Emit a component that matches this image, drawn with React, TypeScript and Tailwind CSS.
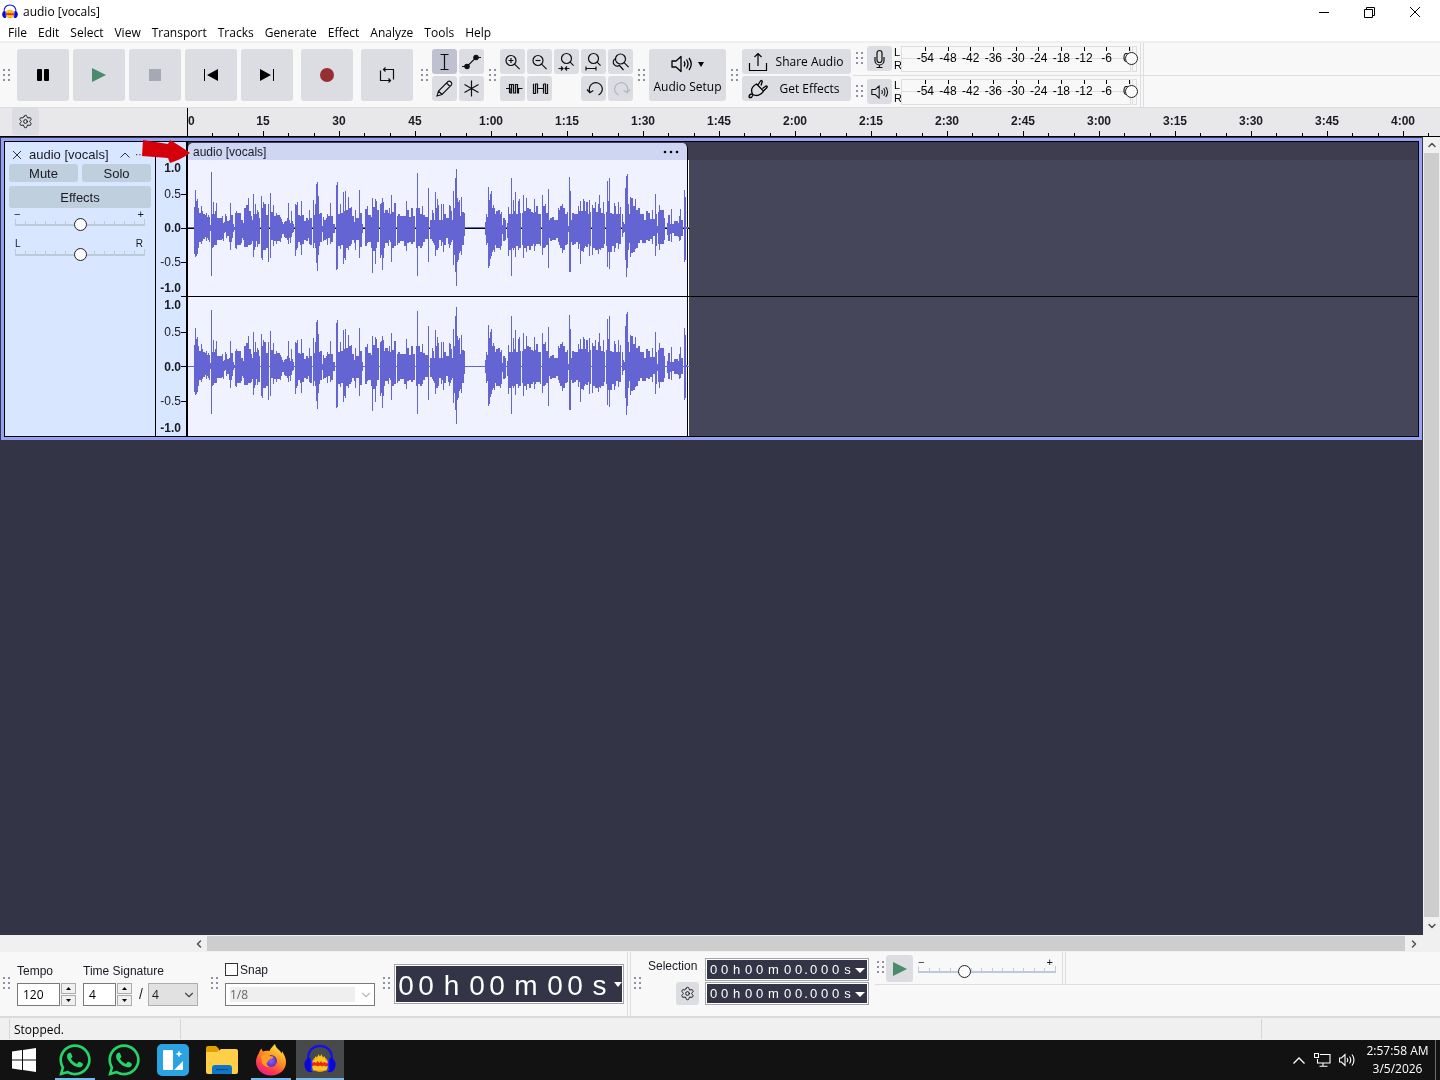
import React from 'react';
import { ChevronDown, ChevronLeft, ChevronRight, ChevronUp, Settings } from 'lucide-react';
import { FaWhatsapp } from 'react-icons/fa';
import clsx from 'clsx';

const UI = "font-['Open_Sans',sans-serif]";
const ARIAL = "font-['Liberation_Sans',Arial,sans-serif]";

// Peaks of the clip, one step each: [x, above the centre line, below it]
const PEAKS: number[][] = [
  [0, 0, 0], [6, 21, 26], [7, 38, 29], [8, 27, 28], [9, 29, 26], [10, 20, 20], [11, 15, 14], [13, 22, 16],
  [14, 17, 13], [15, 14, 11], [17, 13, 9], [18, 15, 13], [19, 11, 10], [20, 13, 12], [21, 11, 14], [22, 3, 3],
  [23, 56, 48], [24, 14, 20], [25, 26, 19], [26, 14, 17], [27, 17, 17], [28, 25, 17], [29, 10, 12], [34, 12, 11],
  [35, 5, 13], [36, 6, 5], [37, 14, 4], [38, 12, 10], [39, 7, 8], [41, 8, 14], [42, 25, 22], [43, 13, 14],
  [44, 13, 10], [45, 4, 4], [46, 1, 2], [47, 15, 20], [48, 17, 21], [49, 15, 17], [53, 8, 15], [54, 8, 10],
  [55, 5, 12], [56, 20, 19], [58, 23, 19], [60, 30, 17], [61, 17, 17], [63, 12, 16], [64, 8, 13], [65, 34, 29],
  [66, 14, 22], [67, 24, 19], [68, 14, 13], [69, 18, 19], [70, 16, 16], [71, 10, 16], [72, 0, 0], [73, 32, 30],
  [74, 20, 32], [75, 26, 22], [76, 24, 22], [78, 13, 20], [80, 24, 34], [81, 0, 0], [82, 35, 30], [83, 16, 12],
  [85, 23, 18], [86, 12, 13], [88, 15, 16], [89, 13, 13], [92, 11, 14], [93, 9, 10], [94, 6, 6], [95, 4, 6],
  [96, 6, 9], [97, 7, 10], [99, 10, 12], [100, 25, 16], [101, 8, 10], [102, 5, 15], [103, 17, 9], [104, 7, 5],
  [105, 4, 4], [106, 0, 0], [107, 24, 28], [108, 23, 22], [109, 26, 20], [110, 13, 14], [112, 12, 17],
  [113, 27, 27], [114, 13, 16], [116, 7, 12], [118, 10, 13], [120, 8, 10], [121, 18, 16], [122, 10, 17],
  [124, 0, 0], [125, 28, 20], [126, 13, 15], [127, 24, 20], [128, 44, 35], [129, 46, 43], [130, 32, 27],
  [131, 14, 18], [132, 15, 14], [134, 2, 4], [135, 11, 13], [136, 8, 12], [138, 10, 11], [139, 14, 17],
  [140, 12, 10], [142, 25, 16], [143, 12, 14], [145, 4, 5], [147, 0, 0], [148, 43, 42], [149, 46, 41],
  [150, 14, 18], [152, 24, 21], [153, 15, 17], [155, 36, 36], [156, 17, 30], [157, 37, 32], [158, 18, 20],
  [160, 31, 22], [161, 20, 18], [163, 21, 16], [164, 12, 12], [166, 6, 15], [167, 18, 22], [168, 10, 12],
  [171, 38, 30], [172, 15, 19], [174, 4, 5], [175, 0, 0], [177, 19, 18], [179, 22, 15], [180, 13, 14],
  [183, 11, 20], [184, 30, 45], [185, 21, 23], [187, 29, 36], [188, 27, 20], [189, 18, 14], [191, 0, 0],
  [192, 24, 30], [193, 25, 27], [194, 30, 42], [195, 26, 30], [196, 15, 20], [197, 18, 15], [200, 15, 18],
  [201, 20, 12], [202, 14, 14], [203, 33, 34], [204, 16, 20], [206, 25, 18], [208, 0, 0], [209, 12, 17],
  [210, 14, 15], [212, 12, 13], [216, 12, 18], [218, 27, 23], [219, 18, 15], [221, 11, 14], [223, 20, 16],
  [225, 12, 14], [227, 0, 0], [228, 20, 20], [229, 55, 48], [230, 20, 18], [232, 14, 20], [234, 22, 18],
  [235, 13, 14], [237, 11, 11], [240, 40, 34], [241, 0, 0], [242, 8, 11], [244, 18, 13], [245, 15, 15],
  [246, 8, 17], [247, 36, 28], [248, 20, 22], [249, 29, 22], [250, 23, 20], [251, 8, 12], [253, 24, 18],
  [254, 8, 14], [255, 24, 24], [256, 14, 17], [258, 10, 10], [260, 10, 16], [261, 23, 20], [262, 22, 17],
  [263, 17, 14], [264, 8, 12], [265, 37, 37], [266, 20, 27], [267, 50, 44], [268, 59, 58], [269, 30, 34],
  [270, 26, 32], [271, 28, 25], [272, 12, 23], [273, 31, 27], [274, 16, 17], [276, 15, 8], [277, 0, 0],
  [297, 6, 7], [298, 14, 17], [299, 11, 15], [300, 41, 40], [301, 28, 38], [302, 34, 31], [303, 37, 28],
  [304, 20, 24], [305, 23, 22], [306, 20, 24], [307, 14, 17], [308, 17, 20], [310, 18, 20], [312, 14, 22],
  [313, 16, 18], [314, 3, 6], [315, 10, 13], [317, 8, 12], [318, 0, 0], [319, 5, 10], [320, 21, 28],
  [321, 14, 22], [323, 50, 48], [324, 14, 20], [325, 28, 22], [326, 17, 20], [327, 36, 29], [328, 14, 18],
  [330, 27, 22], [331, 29, 20], [332, 15, 20], [333, 0, 0], [334, 15, 17], [335, 33, 30], [336, 17, 20],
  [338, 30, 24], [339, 20, 18], [341, 19, 22], [343, 16, 18], [345, 15, 16], [346, 29, 23], [347, 16, 18],
  [348, 22, 16], [350, 14, 16], [352, 14, 18], [353, 0, 0], [354, 33, 27], [355, 22, 20], [357, 24, 19],
  [358, 15, 17], [360, 39, 40], [361, 8, 10], [362, 10, 13], [364, 11, 12], [366, 8, 12], [368, 8, 10],
  [370, 20, 14], [371, 18, 17], [372, 22, 20], [374, 24, 25], [375, 20, 22], [377, 14, 17], [379, 16, 16],
  [380, 2, 4], [381, 51, 44], [382, 37, 44], [383, 8, 14], [384, 15, 17], [386, 14, 16], [388, 14, 14],
  [390, 22, 21], [391, 17, 16], [392, 27, 36], [393, 17, 23], [395, 29, 24], [396, 27, 20], [397, 17, 18],
  [398, 26, 19], [400, 14, 16], [401, 28, 28], [402, 16, 18], [403, 0, 0], [404, 23, 27], [405, 20, 20],
  [407, 26, 22], [408, 16, 22], [410, 24, 26], [411, 33, 21], [412, 20, 22], [413, 15, 20], [415, 26, 20],
  [416, 14, 16], [417, 0, 0], [418, 16, 18], [419, 47, 39], [420, 27, 24], [421, 50, 41], [422, 15, 24],
  [424, 14, 18], [426, 25, 24], [427, 22, 20], [428, 14, 15], [430, 26, 21], [431, 14, 16], [432, 21, 16],
  [433, 0, 0], [434, 14, 9], [435, 6, 5], [436, 4, 4], [437, 40, 32], [438, 52, 49], [439, 54, 40],
  [440, 24, 22], [441, 14, 15], [442, 31, 29], [443, 30, 25], [445, 22, 24], [447, 29, 21], [448, 18, 20],
  [450, 20, 15], [452, 14, 12], [454, 14, 15], [456, 8, 15], [458, 17, 12], [460, 15, 13], [462, 9, 11],
  [464, 18, 16], [465, 9, 8], [467, 34, 28], [468, 14, 18], [469, 2, 5], [470, 16, 16], [471, 23, 22],
  [472, 18, 16], [476, 10, 12], [477, 0, 0], [479, 5, 7], [480, 13, 13], [482, 4, 6], [483, 19, 14],
  [484, 4, 5], [486, 7, 8], [490, 5, 9], [491, 12, 13], [492, 19, 12], [493, 8, 8], [495, 0, 0],
  [496, 38, 34], [497, 31, 32], [498, 1, 1], [500, 0, 0],
];

const wavePath = (cy: number) => {
  let d = '';
  for (let i = 0; i < PEAKS.length - 1; i++) {
    const [x, up, down] = PEAKS[i];
    const w = PEAKS[i + 1][0] - x;
    if (up + down > 0) d += `M${x} ${cy - up}h${w}v${up + down}h${-w}z`;
  }
  return d;
};

const Waveform = ({ cy, zeroLine }: { cy: number; zeroLine?: boolean }) => (
  <svg width="502" height="139" className="absolute left-0 top-0" shapeRendering="crispEdges">
    {zeroLine && <rect x="0" y={cy} width="502" height="1" fill="#000" />}
    <rect x="0" y={zeroLine ? cy - 1 : cy} width="502" height="1" fill="#6464d2" />
    <path d={wavePath(cy)} fill="#6464d2" />
  </svg>
);

const Grip = ({ className }: { className?: string }) => (
  <div className={clsx('grid shrink-0 grid-cols-2 gap-[3px]', className)}>
    {[0, 1, 2, 3, 4, 5].map((i) => (
      <span key={i} className="size-[2px] bg-[#8f90a8]" />
    ))}
  </div>
);

interface BtnProps {
  label: string;
  className?: string;
  children?: React.ReactNode;
}

const Btn: React.FC<BtnProps> = ({ label, className, children }) => (
  <button
    aria-label={label}
    className={clsx('flex shrink-0 items-center justify-center rounded-[3px] text-[#101010]', className)}
  >
    {children}
  </button>
);

const BigBtn: React.FC<BtnProps> = ({ className, ...rest }) => (
  <Btn {...rest} className={clsx('size-[52px] bg-[#dcdde3]', className)} />
);

const SmallBtn: React.FC<BtnProps & { active?: boolean }> = ({ active, className, ...rest }) => (
  <Btn {...rest} className={clsx('size-[25px]', active ? 'bg-[#bfc1d0]' : 'bg-[#dcdde3]', className)} />
);

const Icon = ({ size = 25, children }: { size?: number; children: React.ReactNode }) => (
  <svg width={size} height={size} viewBox={`0 0 ${size} ${size}`} fill="none" stroke="currentColor" strokeWidth="1.2">
    {children}
  </svg>
);

const PlayIcon = () => (
  <svg width="14" height="14" viewBox="0 0 14 14">
    <path d="M0 0L14 7L0 14z" fill="#4a8b6b" />
  </svg>
);

const SpeakerIcon = ({ className }: { className?: string }) => (
  <svg width="22" height="18" viewBox="0 0 22 18" fill="none" stroke="currentColor" strokeWidth="1.3" className={className}>
    <path d="M1 6h4l5-4.500v15L5 12H1z" strokeLinejoin="round" />
    <path d="M13 6.500q1.800 2.500 0 5M15.500 4.500q3 4.500 0 9M18 3q4.500 6 0 12" />
  </svg>
);

const menus = ['File', 'Edit', 'Select', 'View', 'Transport', 'Tracks', 'Generate', 'Effect', 'Analyze', 'Tools', 'Help'];

const AudacityIcon = ({ size }: { size: number }) => (
  <svg width={size} height={size} viewBox="0 0 32 32">
    <circle cx="16" cy="20" r="8" fill="#f0961a" />
    <path d="M7.500 22l1.500-7 1 2 1.500-5 1.500 3 1.500-5 1.500 3 1.500-3 1.500 5 1.500-3 1.500 5 1-2 1.500 7-2 4.500H9z" fill="#f9c51f" />
    <path d="M7.500 19l3-1 1.500 1 1.500-2 2 2 1.500-2 1.500 2 2-1 1.500 1 2.500.5v2.500l-3 .5-1.500-1-2 1-2-1-2 1-2-1-4.500.5z" fill="#ee2a12" />
    <path d="M4.500 18C2.500 7 9 2 16 2s13.500 5 11.500 16" fill="none" stroke="#1414e6" strokeWidth="2.400" />
    <path d="M6.500 14C1 13.500-1 20 1.500 25c1.500 3 4 3.500 6.500 3z" fill="#0808d8" />
    <path d="M25.500 14c5.500-.5 7.500 6 5 11-1.500 3-4 3.500-6.500 3z" fill="#0808d8" />
    <path d="M7.500 15v12M24.500 15v12" stroke="#2c2cff" strokeWidth="1.500" />
  </svg>
);

const TitleBar = () => (
  <header className="shrink-0 bg-white">
    <div className={`flex h-6 items-center pl-[2px] text-[12px] text-black ${UI}`}>
      <AudacityIcon size={16} />
      <h1 className="ml-[5px] grow">audio [vocals]</h1>
      <div className="flex h-[21px] pr-[2px]">
        <Btn label="Minimize" className="w-[46px]">
          <svg width="10" height="10" viewBox="0 0 10 10"><path d="M0 5.500h10" stroke="#000" /></svg>
        </Btn>
        <Btn label="Restore" className="w-[45px]">
          <svg width="11" height="11" viewBox="0 0 11 11" fill="none" stroke="#000">
            <path d="M.5 2.500h8v8h-8zM2.500 2.500v-2h8v8h-2" />
          </svg>
        </Btn>
        <Btn label="Close" className="w-[46px]">
          <svg width="10" height="10" viewBox="0 0 10 10"><path d="M0 0l10 10M10 0L0 10" stroke="#000" /></svg>
        </Btn>
      </div>
    </div>
    <nav className={`flex h-[19px] items-center gap-[11px] border-b-2 border-[#efefef] pl-2 text-[12px] text-black ${UI}`}>
      {menus.map((m) => (
        <button key={m}>{m}</button>
      ))}
    </nav>
  </header>
);

const Magnifier = ({ x = 11, y = 11.5, handle = 5 }: { x?: number; y?: number; handle?: number }) => (
  <>
    <circle cx={x} cy={y} r="5" />
    <path d={`M${x + 3.6} ${y + 3.6}l${handle} ${handle}`} />
  </>
);

const EditTools = () => (
  <div className="ml-1 grid grid-cols-5 gap-[2px]">
    <SmallBtn label="Zoom In">
      <Icon><Magnifier /><path d="M8.500 11.500h5M11 9v5" /></Icon>
    </SmallBtn>
    <SmallBtn label="Zoom Out">
      <Icon><Magnifier /><path d="M8.500 11.500h5" /></Icon>
    </SmallBtn>
    <SmallBtn label="Fit Selection to Width">
      <Icon><Magnifier x={12.5} y={9.5} handle={3.5} /><path d="M4.500 19.500h4.500M15.500 19.500H11M7 17.500l2 2-2 2M13 17.500l-2 2 2 2" /></Icon>
    </SmallBtn>
    <SmallBtn label="Fit Project to Width">
      <Icon><Magnifier x={12.5} y={9.5} handle={3.5} /><path d="M5 19.500h10M5 17.500v4M15 17.500v4" /></Icon>
    </SmallBtn>
    <SmallBtn label="Zoom Toggle">
      <Icon><Magnifier x={12.5} y={10} handle={4.5} /><path d="M7.500 9.500a4 4 0 1 0 4.500 6.500M11.500 16.500l4 4.500" /></Icon>
    </SmallBtn>
    <SmallBtn label="Trim Audio Outside Selection">
      <Icon><path d="M6 12.500h4V17h1.500V8.500h2V17h2V8.500h2V17h1V12.500h4M9.500 17V8.500h2" /></Icon>
    </SmallBtn>
    <SmallBtn label="Silence Audio Selection">
      <Icon><path d="M6.500 8v9.500h2V8h2v9.500M10.500 12.500h6M16.500 8v9.500M16.500 8h2v9.500h2V8M6.500 8H6" /></Icon>
    </SmallBtn>
    <SmallBtn label="Undo" className="col-start-4">
      <Icon><path d="M9 16a6.500 6.500 0 1 1 8.500 3M6 13.500L8.800 16.800l3.500-2.300" /></Icon>
    </SmallBtn>
    <SmallBtn label="Redo" className="text-[#b4b6be]">
      <Icon><path d="M19 16a6.500 6.500 0 1 0-8.500 3M22 13.500L19.200 16.800l-3.500-2.300" /></Icon>
    </SmallBtn>
  </div>
);

const knob =
  '[&::-webkit-slider-thumb]:size-[13px] [&::-webkit-slider-thumb]:appearance-none [&::-webkit-slider-thumb]:rounded-full [&::-webkit-slider-thumb]:border [&::-webkit-slider-thumb]:border-[#222] [&::-webkit-slider-thumb]:bg-[#fbfbfb]';

const Meter = ({ label, children }: { label: string; children: React.ReactNode }) => (
  <div className="flex items-start pl-[3px] pt-[3px]">
    <Grip className="mt-[6px]" />
    <SmallBtn label={label} className="ml-1">{children}</SmallBtn>
    <div className={`ml-[2px] flex w-[7px] flex-col text-[11px] leading-[13px] text-black ${ARIAL}`}>
      <span>L</span>
      <span>R</span>
    </div>
    <div className={`relative flex h-[26px] w-[236px] text-[12px] leading-6 text-black ${ARIAL}`}>
      <div className="absolute inset-y-0 left-0 right-[6px] border border-[#dedede]" />
      <div className="absolute inset-y-0 right-0 w-[5px] border border-[#dedede]" />
      <div className="absolute inset-x-0 top-[12px] h-px bg-[#dedede]" />
      <div className="relative ml-[13px] grid w-[204px] grid-cols-9">
        {[-54, -48, -42, -36, -30, -24, -18, -12, -6].map((v) => (
          <span key={v} className="relative text-center">
            <i className="absolute left-[11px] top-px h-[4px] w-px bg-black" />
            {v}
          </span>
        ))}
      </div>
      <span className="relative ml-[5px]">0<i className="absolute left-[6px] top-px h-[4px] w-px bg-black" /></span>
      <input
        type="range"
        aria-label={`${label} level`}
        defaultValue={100}
        className={`absolute left-px top-[6px] h-[13px] w-full appearance-none bg-transparent ${knob}`}
      />
    </div>
  </div>
);

const MicIcon = () => (
  <Icon>
    <rect x="10" y="4.500" width="5" height="12" rx="2.500" />
    <path d="M8 11v3.500a4.500 4.500 0 0 0 9 0V11M12.500 19v2.500M9.500 21.500h6" />
  </Icon>
);

const TopToolbars = () => (
  <div className="flex h-[65px] shrink-0 items-center overflow-hidden border-b border-[#dcdce0] bg-[#f8f8f8] pl-[3px]">
    <Grip />
    <div className="ml-[7px] flex gap-1">
      <BigBtn label="Pause">
        <svg width="12" height="12" viewBox="0 0 12 12"><rect width="5" height="12" rx="1" /><rect x="7" width="5" height="12" rx="1" /></svg>
      </BigBtn>
      <BigBtn label="Play"><PlayIcon /></BigBtn>
      <BigBtn label="Stop"><span className="size-3 bg-[#a6a9b3]" /></BigBtn>
      <BigBtn label="Skip to Start">
        <svg width="14" height="12" viewBox="0 0 14 12"><path d="M0 0h1v12H0zM14 0v12L3 6z" /></svg>
      </BigBtn>
      <BigBtn label="Skip to End">
        <svg width="14" height="12" viewBox="0 0 14 12"><path d="M14 0h-1v12h1zM0 0v12L11 6z" /></svg>
      </BigBtn>
      <BigBtn label="Record" className="ml-1"><span className="size-[14px] rounded-full bg-[#962f31]" /></BigBtn>
      <BigBtn label="Loop" className="ml-1">
        <Icon size={16}>
          <path d="M1.500 3.500v10h9.500M4.500 2.500h10v10M6.500.5l-2 2 2 2M9.500 11.500l2 2-2 2" />
        </Icon>
      </BigBtn>
    </div>

    <Grip className="ml-2" />
    <div className="ml-1 grid grid-cols-2 gap-[2px]">
      <SmallBtn label="Selection Tool" active>
        <Icon><path d="M12.500 5.500v15M8.500 5.500h8M8.500 20.500h8" /></Icon>
      </SmallBtn>
      <SmallBtn label="Envelope Tool">
        <Icon><path d="M3 17.500h5l9-9h5" /><circle cx="8" cy="17.500" r="2.200" fill="currentColor" /><circle cx="17" cy="8.500" r="2.200" fill="currentColor" /></Icon>
      </SmallBtn>
      <SmallBtn label="Draw Tool">
        <Icon><path d="M5 20l1.500-5L16 5.500q1.500-1 3 .5t.5 3L10 18.500zM14.500 7l3.500 3.500M6.500 15l3.500 3.500" strokeWidth="1.100" /></Icon>
      </SmallBtn>
      <SmallBtn label="Multi-Tool">
        <Icon><path d="M12.500 4.500v16M5.500 8.500l14 8M5.500 16.500l14-8" /></Icon>
      </SmallBtn>
    </div>

    <Grip className="ml-[5px]" />
    <EditTools />

    <Grip className="ml-[5px]" />
    <button className={`ml-1 flex h-[52px] w-[77px] shrink-0 flex-col items-center rounded-[3px] bg-[#dcdde3] pt-[6px] text-[12px] text-black ${UI}`}>
      <span className="flex items-center gap-[5px]">
        <SpeakerIcon />
        <svg width="6" height="5" viewBox="0 0 6 5"><path d="M0 0h6L3 5z" /></svg>
      </span>
      <span className="mt-1 leading-5">Audio Setup</span>
    </button>

    <Grip className="ml-[5px]" />
    <div className={`ml-1 flex w-[109px] shrink-0 flex-col gap-[2px] text-[12px] text-black ${UI}`}>
      <button className="flex h-[25px] items-center rounded-[3px] bg-[#dcdde3] pl-[6px]">
        <Icon size={20}><path d="M1.500 11v7.500h17V11M10 14V1.500M6.500 5L10 1.500 13.500 5" /></Icon>
        <span className="grow text-center">Share Audio</span>
      </button>
      <button className="flex h-[25px] items-center rounded-[3px] bg-[#dcdde3] pl-[6px]">
        <Icon size={20}>
          <path d="M1 18.500c0-2.500 1-3.500 3-3.500M4.500 15c-2-4-.5-7.500 4-10l7 7c-2.500 4.500-7 5.500-10.500 3.500zM10 6l2.500-4q1.500-1.200 1.800.5L13 6.500M14.500 9.500l3.500-2.500q1.700 0 1 1.500L15.500 12M1 18.500h2.500l1.500-2.500" strokeLinejoin="round" strokeWidth="1.300" />
        </Icon>
        <span className="grow text-center">Get Effects</span>
      </button>
    </div>

    <div className="ml-[2px] flex h-full grow flex-col">
      <div className="flex h-[33px] border-b border-[#dedee2]">
        <Meter label="Record Meter"><MicIcon /></Meter>
        <div className="ml-[3px] w-1 border-x border-[#dedee2]" />
      </div>
      <div className="flex h-[31px]">
        <Meter label="Playback Meter"><SpeakerIcon className="size-[18px]" /></Meter>
        <div className="ml-[3px] w-1 border-x border-[#dedee2]" />
      </div>
    </div>
  </div>
);

const times = ['15', '30', '45', '1:00', '1:15', '1:30', '1:45', '2:00', '2:15', '2:30', '2:45', '3:00', '3:15', '3:30', '3:45', '4:00'];

const Timeline = () => (
  <div className="flex h-[29px] shrink-0 border-b border-black bg-[#e8e8eb]">
    <div className="w-[187px] shrink-0 pl-3">
      <Btn label="Timeline options" className="h-[27px] w-[27px] bg-[#dcdde3]">
        <Settings size={15} strokeWidth={1.5} />
      </Btn>
    </div>
    <div className="min-w-0 grow overflow-hidden border-l border-black">
      <div className={`flex h-[23px] items-center pt-[3px] text-[12px] font-bold text-[#1c1c24] ${ARIAL}`}>
        <span className="w-[37px] shrink-0">0</span>
        {times.map((t) => (
          <span key={t} className="w-[76px] shrink-0 text-center">{t}</span>
        ))}
      </div>
      <svg width="100%" height="5" className="block" shapeRendering="crispEdges">
        <defs>
          <pattern id="ticks" width="76" height="5" patternUnits="userSpaceOnUse" x="-1">
            <path d="M0 0h1v5H0zM25 2h1v3h-1zM51 2h1v3h-1z" />
          </pattern>
        </defs>
        <rect width="100%" height="5" fill="url(#ticks)" />
      </svg>
    </div>
  </div>
);

// Slider with a tick scale drawn behind its track
const TickSlider = ({ label, value, className }: { label: string; value: number; className?: string }) => (
  <div className={clsx('relative h-[13px]', className)}>
    <div className="absolute inset-x-0 top-[1px] flex h-[5px] justify-between">
      {Array.from({ length: 14 }, (_, i) => (
        <i key={i} className={clsx('w-px bg-[#bccbe0]', i === 0 || i === 13 ? 'h-[5px]' : 'mt-[2px] h-[3px]')} />
      ))}
    </div>
    <div className="absolute inset-x-0 top-[6px] h-[2px] bg-[#bccbdc]" />
    <input
      type="range"
      aria-label={label}
      defaultValue={value}
      className={`absolute inset-0 w-full appearance-none bg-transparent ${knob}`}
    />
  </div>
);

const TrackPanel = () => (
  <div className={`w-[150px] shrink-0 bg-[#d9e6ff] px-1 text-[13px] text-[#1a1a24] ${ARIAL}`}>
    <div className="flex h-[22px] items-center pl-[3px] pt-[3px]">
      <button aria-label="Close track">
        <svg width="10" height="10" viewBox="0 0 10 10"><path d="M1 1l8 8M9 1L1 9" stroke="#333" /></svg>
      </button>
      <span className="ml-[7px] grow">audio [vocals]</span>
      <button aria-label="Collapse track" className="mr-[5px]">
        <svg width="10" height="6" viewBox="0 0 10 6" fill="none"><path d="M.5 5.500L5 1l4.500 4.500" stroke="#333" /></svg>
      </button>
      <button aria-label="Track menu" className="mr-[2px] w-[14px] text-left text-[10px] leading-3">···</button>
    </div>
    <div className="grid grid-cols-2 gap-1">
      <button className="h-[18px] rounded-[3px] bg-[#c0cfdd] leading-5">Mute</button>
      <button className="h-[18px] rounded-[3px] bg-[#c0cfdd] leading-5">Solo</button>
    </div>
    <button className="mt-1 block h-[22px] w-full rounded-[3px] bg-[#c0cfdd] leading-6">Effects</button>
    <div className="flex h-[10px] justify-between pl-[5px] pr-[7px] text-[11px] leading-3">
      <span>−</span>
      <span>+</span>
    </div>
    <TickSlider label="Volume" value={50} className="mx-[6px]" />
    <div className="mt-[6px] flex h-[11px] justify-between pl-[6px] pr-2 text-[10px] leading-[14px]">
      <span>L</span>
      <span>R</span>
    </div>
    <TickSlider label="Pan" value={50} className="mx-[6px]" />
  </div>
);

const scaleRows = [
  { v: '1.0', h1: 'h-4', h2: 'h-4', bold: true },
  { v: '0.5', h1: 'h-[36px]', h2: 'h-[38px]', tick: true },
  { v: '0.0', h1: 'h-[32px]', h2: 'h-[31px]', bold: true, tick: true },
  { v: '-0.5', h1: 'h-[36px]', h2: 'h-[38px]', tick: true },
  { v: '-1.0', h1: 'h-4', h2: 'h-4', bold: true },
];

const AmplitudeScale = ({ second }: { second?: boolean }) => (
  <div className={`flex flex-col text-[12px] text-[#1a1a24] ${ARIAL}`}>
    {scaleRows.map((r) => (
      <div key={r.v} className={clsx('flex items-center justify-end', second ? r.h2 : r.h1, r.bold && 'font-bold')}>
        <span>{r.v}</span>
        <i className={clsx('h-px w-[5px]', r.tick && 'bg-black')} />
      </div>
    ))}
  </div>
);

const Track = () => (
  <div className="relative border-[3px] border-[#94a1f5] bg-black">
    <div className="flex border border-black">
      <TrackPanel />
      <div className="ml-px w-[30px] shrink-0 bg-[#d9e6ff]">
        <div className="h-[18px]" />
        <AmplitudeScale />
        <div className="ml-auto h-px w-[5px] bg-black" />
        <AmplitudeScale second />
      </div>
      <div className="ml-[2px] min-w-0 grow overflow-hidden bg-[#454659]">
        <div className="h-[18px] bg-[#3d3d4f] pt-px">
          <div className={`flex h-[17px] w-[500px] items-center justify-between rounded-t-[5px] border-r border-black bg-[#ced6f2] pl-[5px] pr-2 text-[12px] text-[#1a1a24] ${ARIAL}`}>
            <span>audio [vocals]</span>
            <button aria-label="Clip menu">
              <svg width="16" height="4" viewBox="0 0 16 4"><circle cx="2" cy="2" r="1.300" /><circle cx="8" cy="2" r="1.300" /><circle cx="14" cy="2" r="1.300" /></svg>
            </button>
          </div>
        </div>
        <div className="relative h-[137px] border-b border-black">
          <div className="h-full w-[501px] border-r border-white bg-[#f0f2ff]">
            <div className="h-full w-[500px] border-r border-black" />
          </div>
          <Waveform cy={68} zeroLine />
        </div>
        <div className="relative h-[139px]">
          <div className="h-full w-[501px] border-r border-white bg-[#f0f2ff]">
            <div className="h-full w-[500px] border-r border-black" />
          </div>
          <Waveform cy={69} />
        </div>
      </div>
    </div>
    {/* red pointer over the clip start */}
    <svg width="48" height="25" viewBox="0 0 48 25" className="pointer-events-none absolute left-[138px] top-[-2px]">
      <path d="M1 1L26 5L28 1Q40 8 48 14Q40 20 28 24L26 19L0 17z" fill="#d4000a" />
    </svg>
  </div>
);

const ScrollArrow: React.FC<BtnProps> = ({ label, className, children }) => (
  <Btn label={label} className={clsx('text-[#505050]', className)}>{children}</Btn>
);

const Workspace = () => (
  <div className="flex min-h-0 grow flex-col">
    <div className="flex min-h-0 grow">
      <div className="min-w-0 grow overflow-hidden bg-[#333546] px-px pt-px">
        <Track />
      </div>
      <div className="flex w-[17px] shrink-0 flex-col bg-[#f0f0f0] px-px">
        <ScrollArrow label="Scroll up" className="h-4"><ChevronUp size={12} strokeWidth={3} /></ScrollArrow>
        <div className="grow bg-[#cdcdcd]" />
        <ScrollArrow label="Scroll down" className="h-[18px]"><ChevronDown size={12} strokeWidth={3} /></ScrollArrow>
      </div>
    </div>
    <div className="flex h-[17px] shrink-0 bg-[#f0f0f0] py-px pl-[191px] pr-[17px]">
      <ScrollArrow label="Scroll left" className="w-4"><ChevronLeft size={12} strokeWidth={3} /></ScrollArrow>
      <div className="grow bg-[#cdcdcd]" />
      <ScrollArrow label="Scroll right" className="w-[18px]"><ChevronRight size={12} strokeWidth={3} /></ScrollArrow>
    </div>
  </div>
);

const Spin = ({ id, label, value, className }: { id: string; label: string; value: string; className: string }) => (
  <div className="flex h-[23px]">
    <input
      id={id}
      aria-label={label}
      defaultValue={value}
      className={clsx('border border-[#7a7a7a] bg-white pl-[5px] text-[12px] text-black', UI, className)}
    />
    <div className="ml-px flex w-[15px] flex-col gap-px">
      <Btn label={`${label} up`} className="h-[11px] rounded-none border border-[#acacac] bg-[#f0f0f0]">
        <svg width="5" height="3" viewBox="0 0 5 3"><path d="M0 3h5L2.500 0z" /></svg>
      </Btn>
      <Btn label={`${label} down`} className="h-[11px] rounded-none border border-[#acacac] bg-[#f0f0f0]">
        <svg width="5" height="3" viewBox="0 0 5 3"><path d="M0 0h5L2.500 3z" /></svg>
      </Btn>
    </div>
  </div>
);

const bigTime = [['0', 'w-5'], ['0', 'w-5'], ['h', 'w-[31px]'], ['0', 'w-5'], ['0', 'w-5'], ['m', 'w-[38px]'], ['0', 'w-5'], ['0', 'w-5'], ['s', 'w-[29px]']];
const smallTime = [
  ['0', 'w-[11px]'], ['0', 'w-[11px]'], ['h', 'w-[13px]'], ['0', 'w-[11px]'], ['0', 'w-[11px]'], ['m', 'w-[17px]'], ['0', 'w-[11px]'],
  ['0', 'w-[11px]'], ['.', 'w-[4px]'], ['0', 'w-[11px]'], ['0', 'w-[11px]'], ['0', 'w-[11px]'], ['s', 'w-[13px]'],
];

const Digits = ({ cells }: { cells: string[][] }) => (
  <>
    {cells.map(([c, w], i) => (
      <span key={i} className={clsx('shrink-0 text-center', w)}>{c}</span>
    ))}
  </>
);

const SelectionTime = ({ label }: { label: string }) => (
  <div className={`flex h-[23px] w-[164px] items-center border border-[#a3a4ad] bg-white p-px text-white ${ARIAL}`}>
    <div className="flex h-full grow items-center bg-[#333546] pl-px pt-px text-[13px]">
      <Digits cells={smallTime} />
      <button aria-label={label} className="ml-px">
        <svg width="10" height="5" viewBox="0 0 10 5"><path d="M0 0h10L5 5z" fill="#fff" /></svg>
      </button>
    </div>
  </div>
);

const BottomToolbars = () => (
  <div className={`flex h-[66px] shrink-0 overflow-hidden border-b-2 border-[#dadade] bg-[#f8f8f8] pl-[3px] text-[12px] text-[#1a1a24] ${ARIAL}`}>
    <Grip className="mt-[25px] self-start" />
    <div className="ml-[7px] shrink-0 pt-[10px]">
      <div className="flex h-[21px] items-start leading-[18px]">
        <label htmlFor="tempo" className="w-[66px]">Tempo</label>
        <label htmlFor="beats">Time Signature</label>
      </div>
      <div className="flex items-center">
        <Spin id="tempo" label="Tempo" value="120" className="w-[43px]" />
        <div className="ml-[7px]"><Spin id="beats" label="Beats" value="4" className="w-[33px]" /></div>
        <span className="ml-[7px] w-[9px] text-[14px]">/</span>
        <div className="relative">
          <select aria-label="Beat unit" className={`h-[23px] w-[50px] appearance-none border border-[#adadad] bg-[#e1e1e1] pl-[3px] text-[12px] ${UI}`}>
            <option>4</option>
          </select>
          <ChevronDown size={14} strokeWidth={2} className="pointer-events-none absolute right-[2px] top-[5px] text-[#444]" />
        </div>
      </div>
    </div>

    <Grip className="ml-[13px] mt-[25px] self-start" />
    <div className="ml-[7px] shrink-0 pt-[10px]">
      <label className="flex h-[21px] items-start gap-[2px] leading-4">
        <input type="checkbox" className="mt-px size-[13px] appearance-none border border-[#333] bg-white" />
        Snap
      </label>
      <div className="relative">
        <select disabled aria-label="Snap to" className={`h-[23px] w-[150px] appearance-none border border-[#7a7a7a] bg-white pl-1 text-[12px] text-[#6d6d6d] opacity-100 ${UI}`}>
          <option>1/8</option>
        </select>
        <div className="pointer-events-none absolute left-[5px] top-1 h-[15px] w-[125px] bg-[#efefef] mix-blend-multiply" />
        <ChevronDown size={14} strokeWidth={2} className="pointer-events-none absolute right-[2px] top-[5px] text-[#bbb]" />
      </div>
    </div>

    <Grip className="ml-2 mt-[25px] self-start" />
    <div className="ml-1 mt-3 flex h-10 w-[230px] shrink-0 border border-[#a3a4ad] bg-white p-px text-white">
      <div className="flex grow items-center bg-[#333546] pt-1 text-[28px] leading-8">
        <Digits cells={bigTime} />
        <svg width="8" height="5" viewBox="0 0 8 5" className="mb-1 shrink-0"><path d="M0 0h8L4 5z" fill="#fff" /></svg>
      </div>
    </div>
    <div className="ml-[3px] w-1 shrink-0 border-x border-[#dedee2]" />

    <Grip className="ml-[3px] mt-[25px] self-start" />
    <div className="ml-[7px] flex w-[51px] shrink-0 flex-col items-end pt-[6px]">
      <span className="h-6 self-start leading-4">Selection</span>
      <Btn label="Selection options" className="size-[23px] bg-[#dcdde3]">
        <Settings size={15} strokeWidth={1.5} />
      </Btn>
    </div>
    <div className="ml-[6px] flex shrink-0 flex-col gap-px pt-[6px]">
      <SelectionTime label="Selection start format" />
      <SelectionTime label="Selection end format" />
    </div>

    <div className="ml-[6px] flex h-[33px] grow border-b border-[#dedee2]">
      <Grip className="ml-[2px] mt-[9px] self-start" />
      <Btn label="Play at speed" className="ml-[2px] mt-[3px] size-[27px] bg-[#dcdde3]"><PlayIcon /></Btn>
      <div className="ml-[5px] w-[138px] shrink-0">
        <div className="flex h-[13px] justify-between pr-[3px] pt-1 text-[11px] leading-[13px]">
          <span>−</span>
          <span>+</span>
        </div>
        <TickSlider label="Playback speed" value={32} />
      </div>
      <div className="ml-[6px] w-1 shrink-0 border-x border-[#dedee2]" />
    </div>
  </div>
);

const StatusBar = () => (
  <div className={`flex h-[22px] shrink-0 bg-[#f0f0f0] py-px pl-[9px] text-[12px] text-black ${UI}`}>
    <span className="w-[171px] border-l border-[#d7d7d7] pl-1 leading-[21px]">Stopped.</span>
    <span className="grow border-x border-[#d7d7d7]" />
    <span className="w-[178px]" />
  </div>
);

const Task = ({ label, running, active, children }: { label: string; running?: boolean; active?: boolean; children: React.ReactNode }) => (
  <button
    aria-label={label}
    className={clsx('relative flex h-10 w-12 items-center justify-center', active && 'bg-[#48494b]')}
  >
    {children}
    {running && <i className={clsx('absolute bottom-0 h-[2px] bg-[#76b9ed]', active ? 'inset-x-0' : 'inset-x-1')} />}
  </button>
);

const FirefoxIcon = () => (
  <svg width="32" height="32" viewBox="0 0 32 32">
    <defs>
      <linearGradient id="fx" x1="0.8" y1="0" x2="0.25" y2="1">
        <stop offset="0" stopColor="#fff14d" />
        <stop offset="0.4" stopColor="#ff9a1f" />
        <stop offset="0.75" stopColor="#ff3d4a" />
        <stop offset="1" stopColor="#e21c8c" />
      </linearGradient>
      <radialGradient id="fxCore">
        <stop offset="0" stopColor="#8a5cff" />
        <stop offset="1" stopColor="#5b31b8" />
      </radialGradient>
    </defs>
    <path d="M4 9c.5-2 1.500-3.500 2.500-4.500.3 1.500.8 2.300 1.500 3C10 6.500 12 6.500 14.500 7c1-3 3.500-5 5.500-7 .5 3.500 3 5 5 7 .8.800 1.200 1.700 1.500 2.500.5-.8.700-1.500.5-2.500C29 10.500 31 14 31 18c0 8-6.500 13.500-15 13.500S1 25.500 1 17.500C1 14.500 2.500 11 4 9z" fill="url(#fx)" />
    <circle cx="16" cy="17" r="6" fill="url(#fxCore)" />
    <path d="M6 12c3-2 7-2 9.500 0 1.500.3 3 .5 3 1.300 0 1.200-2.500 1.700-4 2.200-1.500.8-1 2.500-2.500 3-1 2 1 4 3 4.500-4 .5-8-2-8.500-6-.2-2 .2-3.500-.5-5z" fill="#ff9a22" />
  </svg>
);

const Taskbar = () => (
  <footer className={`flex h-10 shrink-0 bg-[#121212] text-white ${UI}`}>
    <div className="mr-[3px]">
      <Task label="Start">
        <svg width="24" height="24" viewBox="0 0 24 24" fill="#fff">
          <path d="M0 3.500l10-1.400v9.400H0zM11 2l13-2v11.500H11zM0 12.500h10v9.400L0 20.500zM11 12.500h13V24l-13-2z" />
        </svg>
      </Task>
    </div>
    <div className="flex gap-px">
      <Task label="WhatsApp" running><FaWhatsapp size={36} color="#25d366" /></Task>
      <Task label="WhatsApp"><FaWhatsapp size={36} color="#25d366" /></Task>
      <Task label="Lively">
        <svg width="32" height="32" viewBox="0 0 32 32">
          <rect width="32" height="32" rx="5" fill="#2ba3e3" />
          <rect x="6" y="6" width="10" height="20" rx="1" fill="#fff" />
          <path d="M17 26h8q1 0 1-1v-8zM22 6.500l1 2.500 2.500 1-2.500 1-1 2.500-1-2.500-2.500-1 2.500-1z" fill="#fff" />
        </svg>
      </Task>
      <Task label="File Explorer">
        <svg width="32" height="28" viewBox="0 0 32 28">
          <path d="M0 2q0-2 2-2h8l3 3v5H0z" fill="#e0a000" />
          <path d="M0 6h11l4-3h15q2 0 2 2v21q0 2-2 2H2q-2 0-2-2z" fill="#ffcf48" />
          <path d="M6 28v-6q0-3 3-3h14q3 0 3 3v6z" fill="#0e78c8" />
          <path d="M10 23.500h12" stroke="#0a4a86" strokeWidth="1.200" />
        </svg>
      </Task>
      <Task label="Firefox" running><FirefoxIcon /></Task>
      <Task label="Audacity" running active><AudacityIcon size={32} /></Task>
    </div>
    <div className="ml-auto flex items-center pr-1">
      <button aria-label="Show hidden icons" className="mr-[9px]">
        <svg width="12" height="7" viewBox="0 0 12 7" fill="none"><path d="M.5 6.500L6 1l5.500 5.500" stroke="#fff" strokeWidth="1.300" /></svg>
      </button>
      <button aria-label="Network" className="mr-2">
        <svg width="17" height="14" viewBox="0 0 17 14" fill="none" stroke="#fff" strokeWidth="1.100">
          <path d="M6 1.500h10v8.500H3.500V6M.5.500h4v4h-4zM9 10v3M5.500 13.300h8" />
        </svg>
      </button>
      <button aria-label="Volume" className="mr-3">
        <svg width="17" height="14" viewBox="0 0 17 14" fill="none" stroke="#fff" strokeWidth="1.100">
          <path d="M.5 5h2L6 1.500v11L2.500 9h-2zM8 5q1.500 2 0 4M10.500 3.500q2.500 3.500 0 7M13 1.500q4 5.500 0 11" />
        </svg>
      </button>
      <div className="flex w-[59px] flex-col items-center whitespace-nowrap text-[12px] leading-[18px]">
        <span>2:57:58 AM</span>
        <span>3/5/2026</span>
      </div>
      <i className="ml-2 h-10 w-px bg-[#6a6a6a]" />
    </div>
  </footer>
);

export default function App() {
  return (
    <div className="flex h-screen flex-col overflow-hidden bg-[#f0f0f0]">
      <TitleBar />
      <TopToolbars />
      <Timeline />
      <Workspace />
      <BottomToolbars />
      <StatusBar />
      <Taskbar />
    </div>
  );
}
